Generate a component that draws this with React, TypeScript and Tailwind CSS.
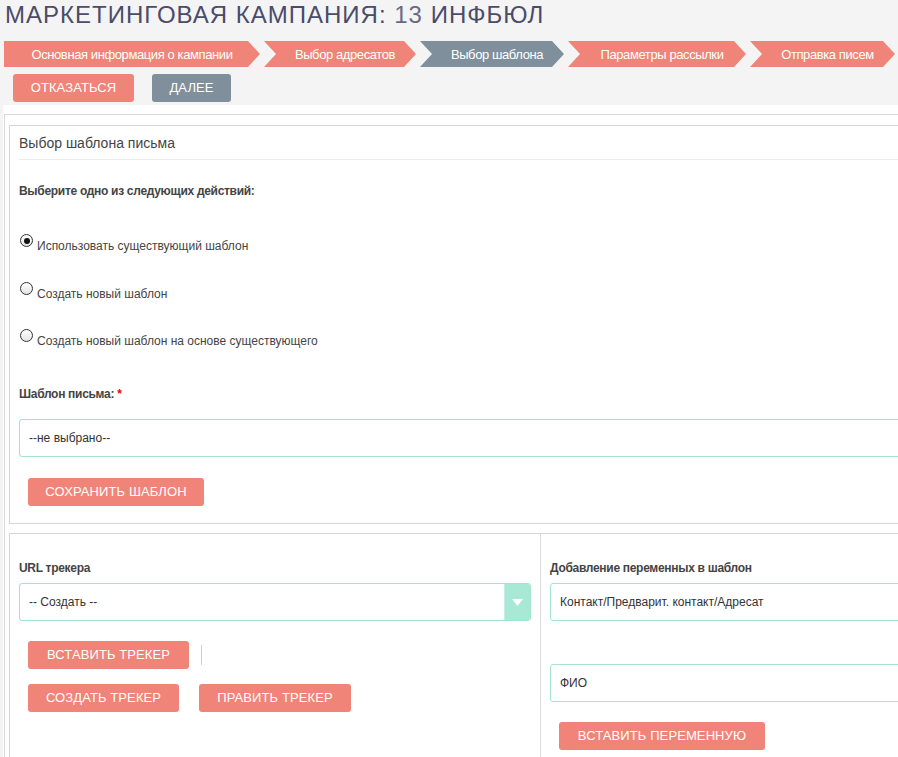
import React from 'react';

const steps = [
  { title: 'Основная информация о кампании', width: 'w-[256px]', active: false, first: true },
  { title: 'Выбор адресатов', width: 'w-[152px]', active: false, first: false },
  { title: 'Выбор шаблона', width: 'w-[144px]', active: true, first: false },
  { title: 'Параметры рассылки', width: 'w-[178px]', active: false, first: false },
  { title: 'Отправка писем', width: 'w-[145px]', active: false, first: false },
];

function Btn({ label, width, gray }: { label: string; width: string; gray?: boolean }) {
  return (
    <button
      type="button"
      className={`${width} h-[28px] rounded-[3px] text-[13px] tracking-[0.1px] text-white uppercase leading-[28px] text-center ${
        gray ? 'bg-[#7f8f9b]' : 'bg-[#f08478]'
      }`}
    >
      {label}
    </button>
  );
}

function Radio({ label, checked }: { label: string; checked?: boolean }) {
  return (
    <label className="flex items-start h-[20px] leading-[20px] text-[12px] text-[#444]">
      <span className="w-[13px] h-[13px] rounded-full border border-[#333] bg-gradient-to-b from-white to-[#e4e4e4] flex items-center justify-center shrink-0 ml-[1px]">
        {checked && <span className="w-[6px] h-[6px] rounded-full bg-[#111]" />}
      </span>
      <span className="ml-[4px] mt-[2px]">{label}</span>
    </label>
  );
}

function Field({ value, arrow }: { value: string; arrow?: boolean }) {
  return (
    <div className="h-[38px] flex items-stretch rounded-[3px] border border-[#a3e5cf] bg-white text-[12px] text-[#333]">
      <div className="flex-1 flex items-center pl-[9px]">{value}</div>
      {arrow && (
        <div className="w-[26px] bg-[#a7e9d5] border-l border-[#c3f0e2] flex items-center justify-center rounded-r-[2px]">
          <svg width="11" height="7" viewBox="0 0 11 7">
            <path d="M0 0 L11 0 L5.5 7 Z" fill="#fff" />
          </svg>
        </div>
      )}
    </div>
  );
}

export default function App() {
  return (
    <div className="w-[898px] h-[757px] overflow-hidden bg-[#f4f4f4] font-['Liberation_Sans',Arial,sans-serif]">
      <div className="w-[1100px]">
        <h1 className="pl-[5px] h-[30px] leading-[30px] text-[24px] tracking-[1px] text-[#4b4b6a] uppercase">
          Маркетинговая кампания: <span className="font-light text-[#6a6a86]">13</span> ИНФБЮЛ
        </h1>

        <div className="mt-[11px] ml-[4px] flex gap-[4px] h-[26px]">
          {steps.map((s) => (
            <div
              key={s.title}
              className={`${s.width} h-[26px] pt-[1px] flex items-center justify-center text-[13px] tracking-[-0.4px] text-white ${
                s.active ? 'bg-[#7f8f9b]' : 'bg-[#f08478]'
              } ${
                s.first
                  ? '[clip-path:polygon(0_0,calc(100%-12px)_0,100%_50%,calc(100%-12px)_100%,0_100%)]'
                  : '[clip-path:polygon(0_0,calc(100%-12px)_0,100%_50%,calc(100%-12px)_100%,0_100%,12px_50%)]'
              }`}
            >
              <span className={s.first ? '' : 'pl-[10px]'}>{s.title}</span>
            </div>
          ))}
        </div>

        <div className="mt-[7px] ml-[13px] flex gap-[18px]">
          <Btn label="Отказаться" width="w-[121px]" />
          <Btn label="Далее" width="w-[79px]" gray />
        </div>

        <div className="mt-[3px] ml-[3px] bg-white pt-[9px]">
          <div className="ml-[1px] border-l border-t border-[#d9d9d9] pt-[10px] pl-[4px]">
            {/* template choice */}
            <div className="border border-[#d5d5d5] pl-[9px] pb-[17px]">
              <div className="h-[34px] leading-[34px] text-[14px] text-[#444] border-b border-[#ececec]">
                Выбор шаблона письма
              </div>
              <div className="mt-[23px] h-[16px] leading-[16px] text-[12px] font-bold tracking-[-0.3px] text-[#444]">
                Выберите одно из следующих действий:
              </div>
              <div className="mt-[35px]">
                <Radio label="Использовать существующий шаблон" checked />
              </div>
              <div className="mt-[28px]">
                <Radio label="Создать новый шаблон" />
              </div>
              <div className="mt-[27px]">
                <Radio label="Создать новый шаблон на основе существующего" />
              </div>
              <div className="mt-[37px] h-[16px] leading-[16px] text-[12px] font-bold tracking-[-0.3px] text-[#444]">
                Шаблон письма: <span className="text-[#e00]">*</span>
              </div>
              <div className="mt-[17px]">
                <Field value="--не выбрано--" />
              </div>
              <div className="mt-[21px] ml-[9px]">
                <Btn label="Сохранить шаблон" width="w-[176px]" />
              </div>
            </div>

            {/* trackers and variables */}
            <div className="mt-[9px] border-l border-t border-[#d5d5d5] flex h-[240px]">
              <div className="w-[531px] border-r border-[#dcdcdc] pl-[9px] pr-[9px] pt-[26px]">
                <div className="h-[16px] leading-[16px] text-[12px] font-bold tracking-[-0.3px] text-[#444]">URL трекера</div>
                <div className="mt-[7px]">
                  <Field value="-- Создать --" arrow />
                </div>
                <div className="mt-[20px] ml-[9px] flex items-center">
                  <Btn label="Вставить трекер" width="w-[161px]" />
                  <span className="ml-[12px] w-[1px] h-[20px] bg-[#d0d0d0]" />
                </div>
                <div className="mt-[15px] ml-[9px] flex gap-[20px]">
                  <Btn label="Создать трекер" width="w-[151px]" />
                  <Btn label="Править трекер" width="w-[152px]" />
                </div>
              </div>
              <div className="flex-1 pl-[9px] pt-[26px]">
                <div className="h-[16px] leading-[16px] text-[12px] font-bold tracking-[-0.3px] text-[#444]">
                  Добавление переменных в шаблон
                </div>
                <div className="mt-[7px]">
                  <Field value="Контакт/Предварит. контакт/Адресат" />
                </div>
                <div className="mt-[43px]">
                  <Field value="ФИО" />
                </div>
                <div className="mt-[20px] ml-[9px]">
                  <Btn label="Вставить переменную" width="w-[206px]" />
                </div>
              </div>
            </div>
          </div>
        </div>
      </div>
    </div>
  );
}
